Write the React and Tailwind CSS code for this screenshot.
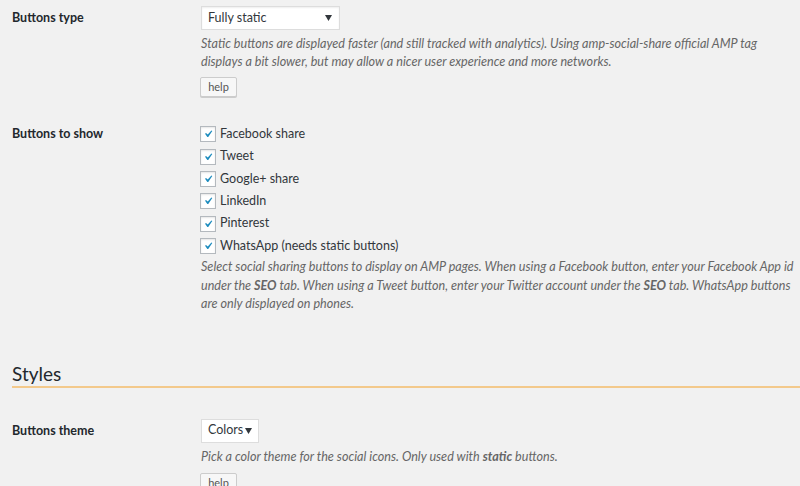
import React from "react";

const font = { fontFamily: 'Lato, "Open Sans", sans-serif' };

function Check({ label }) {
  return (
    <label className="flex items-center h-[22.4px] text-[12.5px] text-[#32373c] whitespace-nowrap">
      <span className="w-4 h-4 border border-[#b4b9be] bg-white shadow-[inset_0_1px_2px_rgba(0,0,0,0.1)] flex items-center justify-center mr-[4px] shrink-0">
        <svg width="16" height="16" viewBox="0 0 20 20">
          <path d="M14.83 4.89l1.34.94-5.81 8.38H9.02L5.78 9.67l1.34-1.25 2.57 2.4z" fill="#1e8cbe" />
        </svg>
      </span>
      <span>{label}</span>
    </label>
  );
}

function HelpBtn() {
  return (
    <button className="h-[20px] w-[37px] text-[11px] leading-[18px] border border-[#ccc] bg-[#f7f7f7] rounded-[2px] text-[#555] shadow-[0_1px_0_#ccc]">
      help
    </button>
  );
}

function Arrow() {
  return (
    <svg width="7" height="6" viewBox="0 0 7 6" className="shrink-0">
      <path d="M0 0h7L3.5 6z" fill="#32373c" />
    </svg>
  );
}

export default function App() {
  return (
    <div className="w-[800px] h-[486px] overflow-hidden bg-[#f1f1f1] text-[#23282d]" style={font}>
      <div className="flex pl-3 pt-[6px]">
        <div className="w-[189px] shrink-0 pt-[3px] leading-[18px] text-[12.5px] font-bold">Buttons type</div>
        <div className="flex-1 min-w-0">
          <div className="w-[139px] h-[24px] bg-white border border-[#ddd] flex items-center justify-between pl-[6px] pr-[7px] text-[12.5px] text-[#32373c] shadow-[inset_0_1px_2px_rgba(0,0,0,0.07)]">
            <span>Fully static</span>
            <Arrow />
          </div>
          <p className="mt-[5px] text-[12.6px] italic text-[#666] leading-[18px] whitespace-nowrap">
            Static buttons are displayed faster (and still tracked with analytics). Using amp-social-share official AMP tag
            <br />
            displays a bit slower, but may allow a nicer user experience and more networks.
          </p>
          <div className="mt-[6px] ml-[-1px] flex">
            <HelpBtn />
          </div>
        </div>
      </div>

      <div className="flex pl-3 pt-[26px]">
        <div className="w-[188px] shrink-0 leading-[22px] text-[12.5px] font-bold">Buttons to show</div>
        <div className="flex-1 min-w-0">
          <Check label="Facebook share" />
          <Check label="Tweet" />
          <Check label="Google+ share" />
          <Check label="LinkedIn" />
          <Check label="Pinterest" />
          <Check label="WhatsApp (needs static buttons)" />
          <p className="mt-[1px] ml-[1px] text-[12.6px] italic text-[#666] leading-[18.5px] whitespace-nowrap">
            Select social sharing buttons to display on AMP pages. When using a Facebook button, enter your Facebook App id
            <br />
            under the <b>SEO</b> tab. When using a Tweet button, enter your Twitter account under the <b>SEO</b> tab. WhatsApp buttons
            <br />
            are only displayed on phones.
          </p>
        </div>
      </div>

      <div className="mt-[48px] ml-3 border-b-2 border-[#f3c98b]">
        <h2 className="text-[19px] leading-[24px] text-[#23282d]">Styles</h2>
      </div>

      <div className="flex pl-3 pt-[31px]">
        <div className="w-[189px] shrink-0 pt-[3px] leading-[18px] text-[12.5px] font-bold">Buttons theme</div>
        <div className="flex-1 min-w-0">
          <div className="w-[58px] h-[24px] bg-white border border-[#ddd] flex items-center justify-between pl-[6px] pr-[6px] text-[12.5px] text-[#32373c]">
            <span>Colors</span>
            <Arrow />
          </div>
          <p className="mt-[5px] text-[12.6px] italic text-[#666] leading-[18px] whitespace-nowrap">
            Pick a color theme for the social icons. Only used with <b>static</b> buttons.
          </p>
          <div className="mt-[7px] ml-[-1px] flex">
            <HelpBtn />
          </div>
        </div>
      </div>
    </div>
  );
}
